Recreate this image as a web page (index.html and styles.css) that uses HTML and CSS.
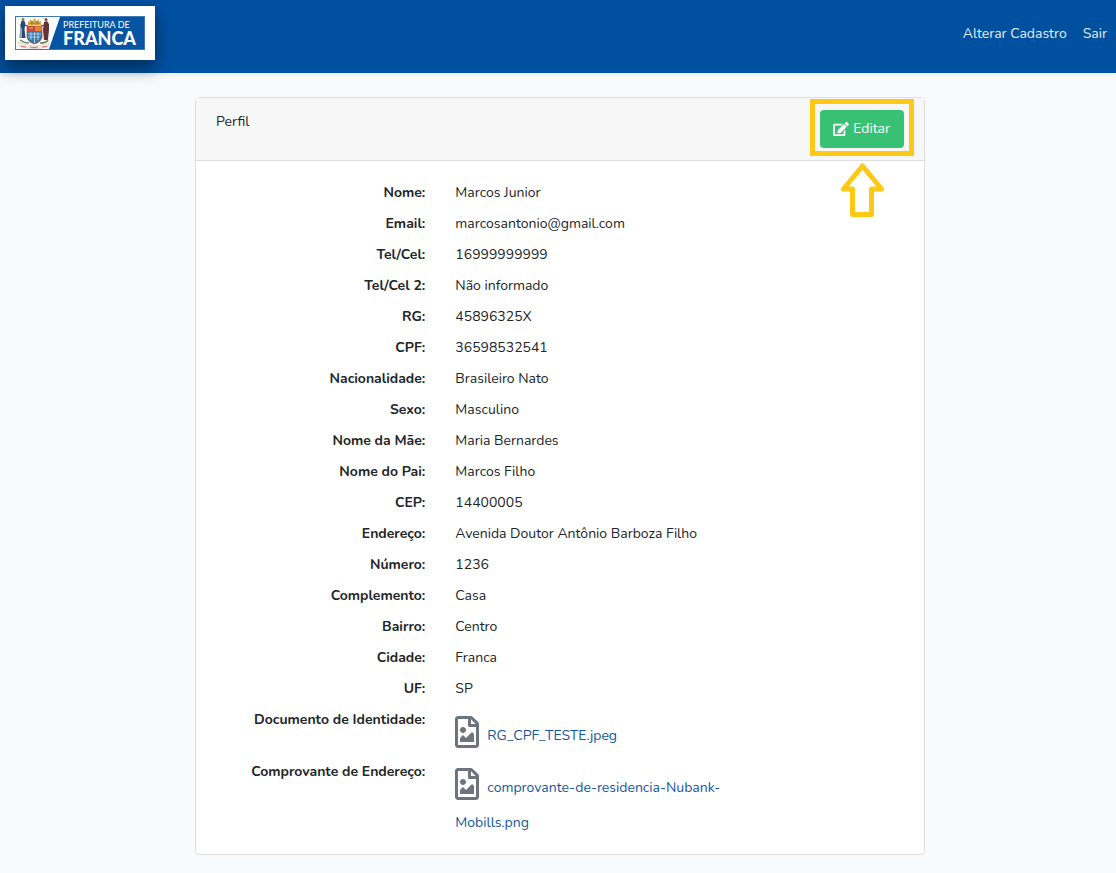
FILE: index.html
```html
<!DOCTYPE html>
<html lang="pt-BR">
<head>
<meta charset="utf-8">
<meta name="viewport" content="width=device-width, initial-scale=1">
<title>Perfil</title>
<link rel="stylesheet" href="styles.css">
</head>
<body>
<svg class="defs" width="0" height="0" aria-hidden="true">
  <symbol id="file-image" viewBox="0 0 384 512"><path d="M369.900 97.900L286 14C277 5 264.800 0 252.100 0H48C21.500 0 0 21.500 0 48v416c0 26.500 21.500 48 48 48h288c26.500 0 48-21.500 48-48V131.900c0-12.700-5.100-25-14.100-34zM332.100 128H256V51.900l76.100 76.100zM48 464V48h160v104c0 13.300 10.700 24 24 24h104v288H48zm32-48h224V288l-23.500-23.500c-4.700-4.700-12.300-4.700-17 0L176 352l-39.500-39.500c-4.700-4.700-12.300-4.700-17 0L80 352v64zm48-240c-26.500 0-48 21.500-48 48s21.500 48 48 48 48-21.500 48-48-21.500-48-48-48z"/></symbol>
</svg>
<header class="navbar">
  <a class="brand" href="#" aria-label="Prefeitura de Franca">
    <svg class="brand-logo" viewBox="0 0 130 34" aria-hidden="true">
      <rect width="130" height="34" fill="#0754a3"/>
      <path d="M1 1H45L34 33H1z" fill="#fff"/>
      <!-- left supporter -->
      <path d="M6.500 5h3l1 3-1 5 1 9H6l1-8-2-4z" fill="#27477d"/>
      <path d="M5 9l2 4v9H4l1-6z" fill="#8da3c2"/>
      <path d="M9 9l4 1" stroke="#27477d"/>
      <circle cx="8" cy="3.500" r="1.500" fill="#93684e"/>
      <!-- right supporter -->
      <path d="M29 6l3-1 2 3v6l-1 10h-4l-1-10z" fill="#653238"/>
      <path d="M29 9l-3 1" stroke="#653238"/>
      <circle cx="31" cy="3.500" r="1.500" fill="#7d4a3d"/>
      <!-- crown -->
      <path d="M13 9V5l2 1V3l2.500 2 2-3 2 3L24 3v3l2-1v4z" fill="#dbb146"/>
      <path d="M14 7h11M17 5v4M22 5v4" stroke="#85702e" stroke-width=".800"/>
      <!-- shield -->
      <path d="M12 10h15v12q-2 5-7.500 6Q14 27 12 22z" fill="#3b79ad"/>
      <path d="M12 10h15v5H12z" fill="#d2452f"/>
      <path d="M20 10h7v5h-7z" fill="#e3843b"/>
      <path d="M14 12h4M13 18h13M13 21h12M16 16v8M19.500 16v11M23 16v8" stroke="#c3dbe8" stroke-width=".800"/>
      <path d="M12 10h15v12q-2 5-7.500 6Q14 27 12 22z" fill="none" stroke="#b05043" stroke-width=".700"/>
      <!-- branches and ribbon -->
      <path d="M5 24q4 3 9 3M25 27q6 0 8-3" fill="none" stroke="#64865b" stroke-width="1.500"/>
      <path d="M3 26l7 2q10 4 19 0l5-2-1 5-6 1q-7 1-15 0l-7-1z" fill="#f8eeea" stroke="#c5b3ac" stroke-width=".500"/>
      <path d="M6 30l5 1m4 0q4 1 8 0m4 0l5-1" fill="none" stroke="#cf7068"/>
      <rect x=".500" y=".500" width="129" height="33" fill="none" stroke="#3c79b8"/>
      <text class="logo-small" x="48" y="12">PREFEITURA DE</text>
      <text class="logo-large" x="48" y="29">FRANCA</text>
    </svg>
  </a>
  <nav class="nav">
    <a href="#">Alterar Cadastro</a>
    <a href="#">Sair</a>
  </nav>
</header>
<main class="page">
  <section class="card">
    <div class="card-header">
      <span class="card-title">Perfil</span>
      <div class="callout">
        <button class="btn-edit" type="button">
          <svg class="edit-icon" viewBox="0 0 576 512" aria-hidden="true"><path fill="currentColor" d="M402.600 83.200l90.200 90.200c3.800 3.800 3.800 10 0 13.800L274.400 405.600l-92.800 10.300c-12.400 1.400-22.900-9.100-21.500-21.500l10.300-92.800L388.800 83.200c3.800-3.800 10-3.800 13.800 0zm162-22.900l-48.800-48.800c-15.200-15.200-39.900-15.200-55.200 0l-35.400 35.400c-3.800 3.800-3.800 10 0 13.800l90.200 90.200c3.800 3.800 10 3.800 13.800 0l35.400-35.400c15.200-15.300 15.200-40 0-55.200zM384 346.200V448H64V128h229.800c3.200 0 6.200-1.300 8.500-3.500l40-40c7.600-7.600 2.200-20.500-8.500-20.500H48C21.500 64 0 85.500 0 112v352c0 26.500 21.500 48 48 48h352c26.500 0 48-21.500 48-48V306.200c0-10.700-12.900-16-20.500-8.500l-40 40c-2.200 2.300-3.500 5.300-3.500 8.500z"/></svg>
          Editar
        </button>
        <svg class="callout-arrow" viewBox="0 0 44 54" aria-hidden="true"><path d="M22.500 3L3.500 26H12.500V51.500H31.500V26H41.500z" fill="#fff" stroke="#fdc915" stroke-width="5" stroke-linejoin="round"/></svg>
      </div>
    </div>
    <dl class="details">
      <dt>Nome:</dt><dd>Marcos Junior</dd>
      <dt>Email:</dt><dd>marcosantonio@gmail.com</dd>
      <dt>Tel/Cel:</dt><dd>16999999999</dd>
      <dt>Tel/Cel 2:</dt><dd>Não informado</dd>
      <dt>RG:</dt><dd>45896325X</dd>
      <dt>CPF:</dt><dd>36598532541</dd>
      <dt>Nacionalidade:</dt><dd>Brasileiro Nato</dd>
      <dt>Sexo:</dt><dd>Masculino</dd>
      <dt>Nome da Mãe:</dt><dd>Maria Bernardes</dd>
      <dt>Nome do Pai:</dt><dd>Marcos Filho</dd>
      <dt>CEP:</dt><dd>14400005</dd>
      <dt>Endereço:</dt><dd>Avenida Doutor Antônio Barboza Filho</dd>
      <dt>Número:</dt><dd>1236</dd>
      <dt>Complemento:</dt><dd>Casa</dd>
      <dt>Bairro:</dt><dd>Centro</dd>
      <dt>Cidade:</dt><dd>Franca</dd>
      <dt>UF:</dt><dd>SP</dd>
      <dt>Documento de Identidade:</dt>
      <dd class="file"><svg class="file-icon" aria-hidden="true"><use href="#file-image"/></svg><a href="#">RG_CPF_TESTE.jpeg</a></dd>
      <dt>Comprovante de Endereço:</dt>
      <dd class="file"><svg class="file-icon" aria-hidden="true"><use href="#file-image"/></svg><a href="#">comprovante-de-residencia-Nubank-Mobills.png</a></dd>
    </dl>
  </section>
</main>
</body>
</html>
```
FILE: styles.css
```css
* {
  box-sizing: border-box;
}

body {
  margin: 0;
  background: #f8fafc;
  color: #212529;
  font-family: Nunito, "Open Sans", "Noto Sans", sans-serif;
  font-size: 14px;
  line-height: 23px;
}

a {
  color: #1456a0;
  text-decoration: none;
}

.defs {
  position: absolute;
}

.navbar {
  display: flex;
  justify-content: space-between;
  align-items: flex-start;
  padding: 6px 9px 13px 5px;
  background: #0050a0;
  box-shadow: 0 2px 4px rgba(0, 0, 0, 0.06);
}

.brand {
  display: flex;
  padding: 10px;
  background: #fff;
  box-shadow: 0 8px 16px rgba(0, 0, 0, 0.45);
}

.brand-logo {
  display: block;
  width: 130px;
  height: 34px;
}

.logo-small,
.logo-large {
  fill: #fff;
  font-family: Lato, sans-serif;
}

.logo-small {
  font-size: 9px;
}

.logo-large {
  font-size: 18px;
  font-weight: 900;
}

.nav {
  display: flex;
  gap: 16px;
  padding-top: 16px;
}

.nav a {
  color: #e3edf6;
}

.page {
  padding: 24px 16px 18px 20px;
}

.card {
  max-width: 730px;
  margin: 0 auto;
  border: 1px solid #dfdfdf;
  border-radius: 4px;
  background: #fff;
}

.card-header {
  display: flex;
  justify-content: space-between;
  align-items: flex-start;
  padding: 12px 20px;
  border-bottom: 1px solid #dfdfdf;
  background: #f7f7f7;
}

.callout {
  position: relative;
}

.callout::before {
  content: "";
  position: absolute;
  inset: -11px -10px -8px;
  border: 5px solid #fdc915;
  pointer-events: none;
}

.callout-arrow {
  position: absolute;
  top: 53px;
  left: 20px;
  width: 44px;
  height: 54px;
}

.btn-edit {
  display: flex;
  align-items: center;
  gap: 4px;
  height: 38px;
  padding: 0 14px 1px 13px;
  border: 0;
  border-radius: 4px;
  background: #38c172;
  color: #fff;
  font: inherit;
}

.edit-icon {
  width: 16px;
  height: 14px;
}

.details {
  display: grid;
  grid-template-columns: 4fr 6fr 2fr;
  row-gap: 8px;
  margin: 0;
  padding: 20px 5px 15px;
}

.details dt {
  grid-column: 1;
  padding-right: 15px;
  font-weight: 700;
  text-align: right;
}

.details dd {
  grid-column: 2;
  margin: 0;
  padding: 0 15px;
}

.details .file {
  margin-bottom: -1px;
  padding-top: 10px;
  line-height: 35px;
}

.file-icon {
  width: 24px;
  height: 32px;
  margin: -4px 8px 0 0;
  fill: #6c757d;
  vertical-align: -8px;
}
```
